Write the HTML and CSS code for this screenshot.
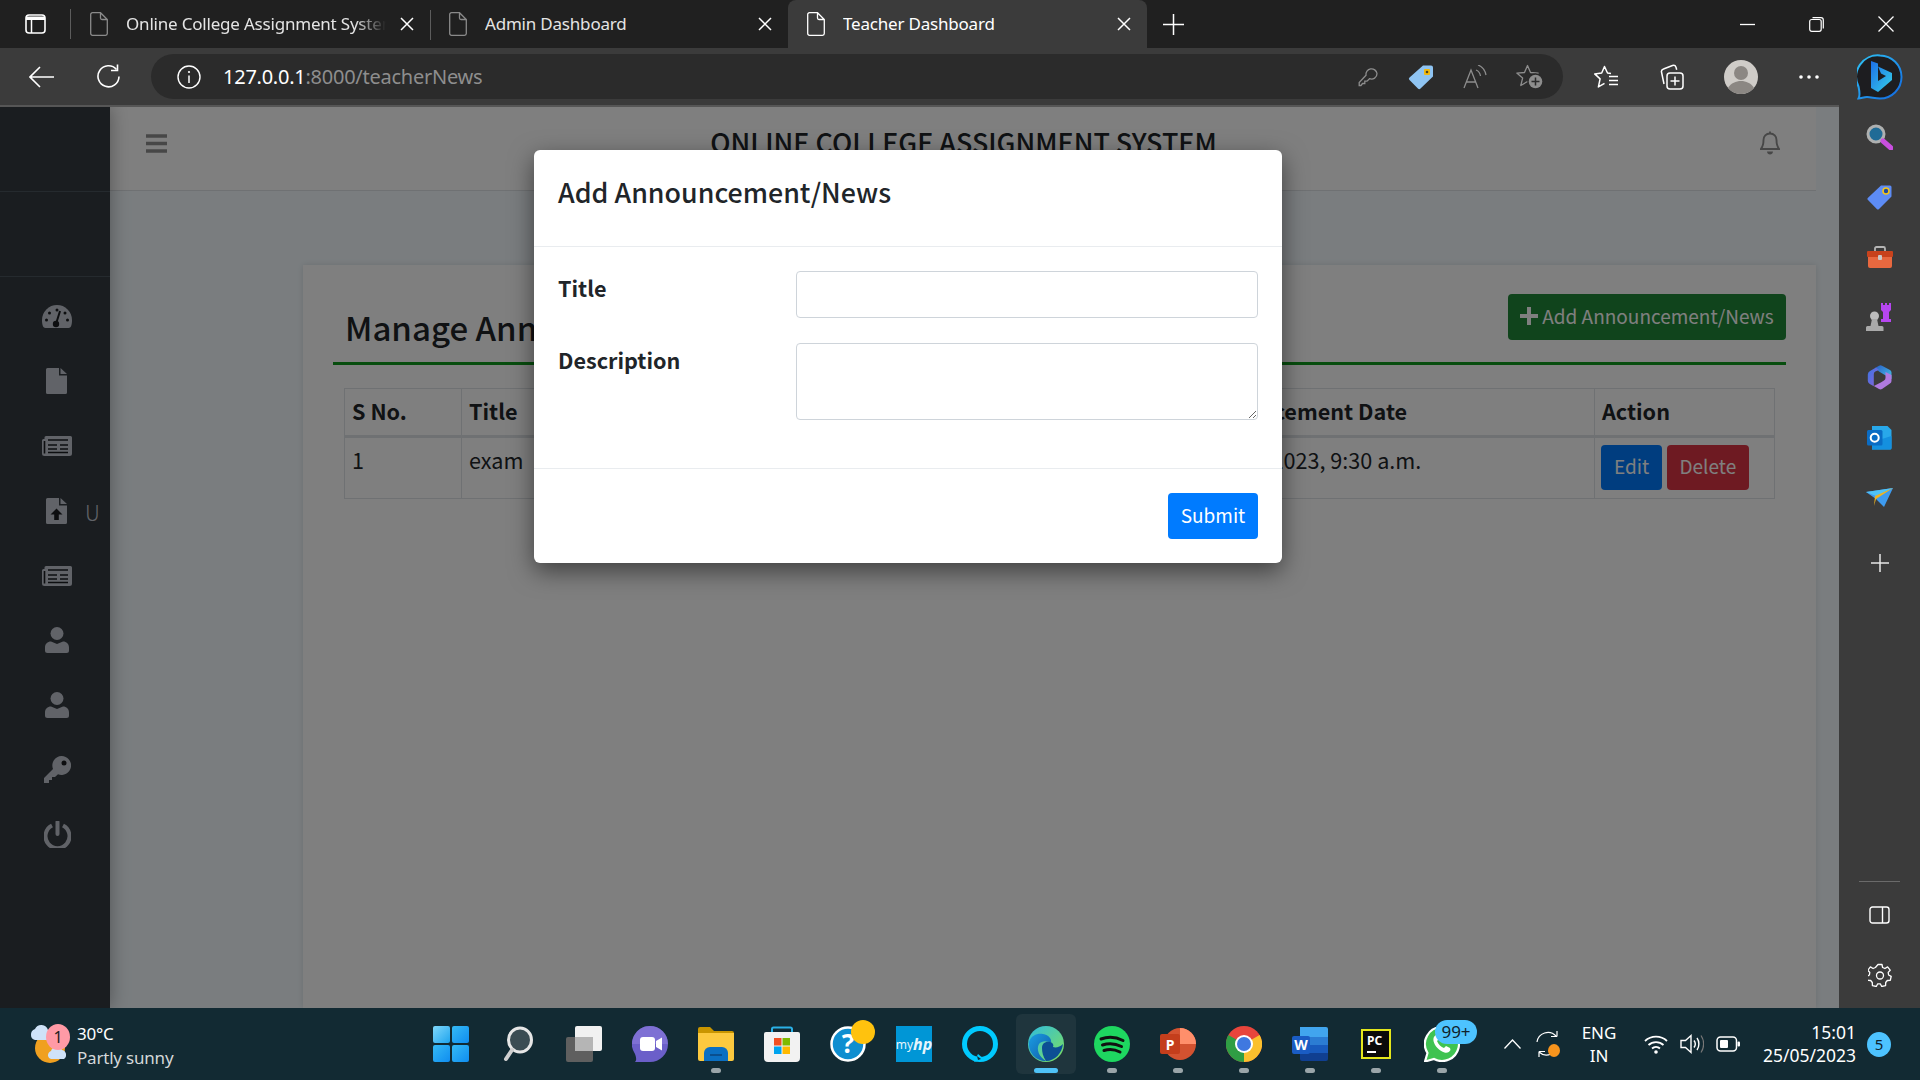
FILE: index.html
```html
<!DOCTYPE html>
<html lang="en">
<head>
    <meta charset="UTF-8">
    <title>Teacher Dashboard</title>
    <link rel="stylesheet" href="styles.css">
</head>
<body>
    <svg class="defs" width="0" height="0">
        <symbol id="doc" viewBox="0 0 18 24"><path d="M2.5 .7h8l6.8 6.8v14a1.8 1.8 0 0 1-1.8 1.8h-13A1.8 1.8 0 0 1 .7 21.500v-19A1.800 1.800 0 0 1 2.500 .7zM10.500 .7v5.300a1.500 1.500 0 0 0 1.500 1.500h5.300" fill="none" stroke="currentColor" stroke-width="1.300"/></symbol>
        <symbol id="close" viewBox="0 0 14 14"><path d="M1 1l12 12M13 1L1 13" stroke="currentColor" stroke-width="1.500"/></symbol>
        <symbol id="news" viewBox="0 0 30 20"><path d="M4 0h24.500A1.500 1.500 0 0 1 30 1.500v16a2.500 2.500 0 0 1-2.500 2.500H2.500A2.500 2.500 0 0 1 0 17.500V4.500a1.500 1.500 0 0 1 1.500-1.500H2.500V1.500A1.500 1.500 0 0 1 4 0z" fill="currentColor"/><path d="M2.500 5v12.500M6 4h20M6 9h9M18 9h8M6 13h9M18 13h8M6 16.500h20" stroke="#1a1d20" stroke-width="1.600" fill="none"/></symbol>
        <symbol id="person" viewBox="0 0 24 26"><circle cx="12" cy="6.500" r="6.500" fill="currentColor"/><path d="M6 14.500l6 2.500 6-2.500c3.500 0 6 2.500 6 6v3a2.500 2.500 0 0 1-2.500 2.500h-19A2.500 2.500 0 0 1 0 23.500v-3c0-3.500 2.500-6 6-6z" fill="currentColor"/></symbol>
    </svg>

    <div class="tabstrip">
        <div class="tab-toggle">
            <svg width="21" height="20" viewBox="0 0 21 20"><rect x="1" y="1" width="19" height="18" rx="3" fill="none" stroke="#fff" stroke-width="1.600"/><path d="M1 2.500h19V6H1z" fill="#fff"/><path d="M6.500 6v13" stroke="#fff" stroke-width="1.500"/></svg>
        </div>
        <div class="tab">
            <svg class="tab-doc" width="18" height="24"><use href="#doc"/></svg>
            <span class="tab-title tab-title-fade">Online College Assignment System</span>
            <svg class="tab-close" width="14" height="14"><use href="#close"/></svg>
        </div>
        <div class="tab tab-second">
            <svg class="tab-doc" width="18" height="24"><use href="#doc"/></svg>
            <span class="tab-title">Admin Dashboard</span>
            <svg class="tab-close" width="14" height="14"><use href="#close"/></svg>
        </div>
        <div class="tab tab-active">
            <svg class="tab-doc" width="18" height="24"><use href="#doc"/></svg>
            <span class="tab-title">Teacher Dashboard</span>
            <svg class="tab-close" width="14" height="14"><use href="#close"/></svg>
        </div>
        <svg class="tab-new" width="21" height="21" viewBox="0 0 21 21"><path d="M10.500 0v21M0 10.500h21" stroke="#fff" stroke-width="1.500"/></svg>
        <div class="window-btns">
            <svg width="15" height="15" viewBox="0 0 15 15"><path d="M0 7.500h15" stroke="#fff" stroke-width="1.300"/></svg>
            <svg width="15" height="15" viewBox="0 0 15 15"><rect x=".7" y="2.500" width="11.500" height="11.800" rx="2" fill="none" stroke="#fff" stroke-width="1.200"/><path d="M3.500 .7h8.500a2.300 2.300 0 0 1 2.300 2.300v8.500" fill="none" stroke="#fff" stroke-width="1.200"/></svg>
            <svg width="16" height="16" viewBox="0 0 16 16"><path d="M.5 .5l15 15M15.500 .5l-15 15" stroke="#fff" stroke-width="1.300"/></svg>
        </div>
    </div>

    <div class="toolbar">
        <svg class="nav-back" width="25" height="22" viewBox="0 0 25 22"><path d="M25 11H1.500M11 1L1 11l10 10" fill="none" stroke="#fff" stroke-width="1.600"/></svg>
        <svg class="nav-reload" width="25" height="25" viewBox="0 0 25 25"><path d="M20.500 5.500A10.500 10.500 0 1 0 23 12.500" fill="none" stroke="#fff" stroke-width="1.600"/><path d="M21.500 .5v6h-6.500" fill="none" stroke="#fff" stroke-width="1.600"/></svg>
        <div class="addressbar">
            <svg class="addr-info" width="24" height="24" viewBox="0 0 24 24"><circle cx="12" cy="12" r="11" fill="none" stroke="#fff" stroke-width="1.400"/><path d="M12 10.500v7.500" stroke="#fff" stroke-width="1.500"/><circle cx="12" cy="7" r="1.100" fill="#fff"/></svg>
            <span class="url"><b>127.0.0.1</b>:8000/teacherNews</span>
            <div class="addr-icons">
                <svg class="addr-key" width="20" height="20" viewBox="0 0 20 20"><path d="M19 6.500a5.500 5.500 0 0 1-7.500 5.200L9 14.200H6.800v2.300H4.500L3 18.500H1.200v-3L8 8.300A5.500 5.500 0 1 1 19 6.500z" fill="none" stroke="#8d8d8d" stroke-width="1.300"/></svg>
                <svg width="26" height="26" viewBox="0 0 26 26"><path d="M15 1.500h8a2 2 0 0 1 2 2v9L12.500 24.500a1.800 1.800 0 0 1-2.600 0L1.500 16a1.800 1.800 0 0 1 0-2.600z" fill="#8fc4f2"/><rect x="16" y="5" width="6" height="6" rx="1" fill="#f2b90f"/><circle cx="19" cy="8" r="1.300" fill="#4b4420"/></svg>
                <svg width="24" height="24" viewBox="0 0 24 24"><path d="M1 23L8 5l7 18M3.500 17h9" fill="none" stroke="#8d8d8d" stroke-width="1.300"/><path d="M13 5c2.500 1 4 3 4.500 6M15 0c4 1.500 7 5 8 10" fill="none" stroke="#8d8d8d" stroke-width="1.300"/></svg>
                <svg width="27" height="25" viewBox="0 0 27 25"><path d="M11.500 1.500l3 7 7.700.6-5.800 5 1.800 7.400-6.700-4-6.700 4 1.800-7.400-5.800-5 7.700-.6z" fill="none" stroke="#8d8d8d" stroke-width="1.300" stroke-linejoin="round"/><circle cx="19.500" cy="17.500" r="8.200" fill="#2b2b2b"/><circle cx="19.500" cy="17.500" r="6.800" fill="#8d8d8d"/><path d="M19.500 13.500v8M15.500 17.500h8" stroke="#2b2b2b" stroke-width="1.500"/></svg>
            </div>
        </div>
        <div class="tool-icons">
            <svg class="tool-fav" width="25" height="24" viewBox="0 0 25 24"><path d="M17 8.400L13.500 8l-3-6.500L7.700 8l-7 .9 5.400 5-1.700 8 6.100-3.600" fill="none" stroke="#fff" stroke-width="1.500" stroke-linejoin="round"/><path d="M15 11.500h9M15 15.500h9M15 19.500h9" stroke="#fff" stroke-width="1.500"/></svg>
            <svg class="tool-coll" width="24" height="26" viewBox="0 0 24 26"><path d="M4 20L1.500 8c-.3-1.500.3-2.500 2-3l9-3.500c1.500-.5 3 .3 3.500 1.700l.7 2.500" fill="none" stroke="#fff" stroke-width="1.500"/><rect x="7" y="9" width="16" height="16" rx="3" fill="none" stroke="#fff" stroke-width="1.500"/><path d="M15 12.500v9M10.500 17h9" stroke="#fff" stroke-width="1.500"/></svg>
            <svg class="tool-avatar" width="34" height="34" viewBox="0 0 34 34"><circle cx="17" cy="17" r="17" fill="#cfccc8"/><circle cx="17" cy="13" r="7" fill="#8b8783"/><path d="M4 28c3-5 8-7 13-7s10 2 13 7a17 17 0 0 1-26 0z" fill="#8b8783"/></svg>
            <svg class="tool-more" width="20" height="4" viewBox="0 0 20 4"><circle cx="2" cy="2" r="1.800" fill="#fff"/><circle cx="10" cy="2" r="1.800" fill="#fff"/><circle cx="18" cy="2" r="1.800" fill="#fff"/></svg>
            <svg class="tool-bing" width="46" height="46" viewBox="0 0 46 46">
                <defs>
                    <linearGradient id="bingRing" x1="0" y1="0" x2="1" y2="1"><stop offset="0" stop-color="#2fc4f5"/><stop offset="1" stop-color="#1268e0"/></linearGradient>
                    <linearGradient id="bingB" x1="0" y1="0" x2="1" y2="1"><stop offset="0" stop-color="#1d6fe8"/><stop offset="1" stop-color="#35d0e8"/></linearGradient>
                </defs>
                <path d="M23 1.500a21.500 21.500 0 0 1 0 43c-5 0-9-1.500-13-1.500-3 0-6 1.500-8.500 1.500 2-3 1-7 0-12A21.500 21.500 0 0 1 23 1.500z" fill="#1d1d20" stroke="url(#bingRing)" stroke-width="2"/>
                <path d="M14 7l7 2.500V27l8-5-5-2.500-3-7L35 19v7L21 38l-7-4z" fill="url(#bingB)"/>
            </svg>
        </div>
    </div>

    <div class="workspace">
        <div class="page">
            <aside class="sidebar">
                <div class="side-head"></div>
                <div class="side-head"></div>
                <nav class="side-nav">
                    <a class="side-link">
                        <svg width="30" height="23" viewBox="0 0 30 23"><path d="M15 0a15 15 0 0 1 15 15c0 3.500-.5 8-3.500 8H3.500C.5 23 0 18.500 0 15A15 15 0 0 1 15 0z" fill="currentColor"/><g fill="#1a1d20"><circle cx="15" cy="5" r="1.500"/><circle cx="7.500" cy="8" r="1.500"/><circle cx="23" cy="8" r="1.500"/><circle cx="4.500" cy="15" r="1.500"/><circle cx="25.500" cy="15" r="1.500"/></g><path d="M14 19l4-13" stroke="#1a1d20" stroke-width="2"/><circle cx="14" cy="19" r="3.200" fill="#1a1d20"/></svg>
                    </a>
                    <a class="side-link">
                        <svg class="icon-file" width="21" height="26" viewBox="0 0 21 26"><path d="M1.500 0H13v7.500h8v17A1.500 1.500 0 0 1 19.500 26h-18A1.500 1.500 0 0 1 0 24.500v-23A1.500 1.500 0 0 1 1.500 0zM14.500 0L21 6h-6.500z" fill="currentColor"/></svg>
                    </a>
                    <a class="side-link"><svg width="30" height="20"><use href="#news"/></svg></a>
                    <a class="side-link">
                        <svg class="icon-file" width="21" height="26" viewBox="0 0 21 26"><path d="M1.500 0H13v7.500h8v17A1.500 1.500 0 0 1 19.500 26h-18A1.500 1.500 0 0 1 0 24.500v-23A1.500 1.500 0 0 1 1.500 0zM14.500 0L21 6h-6.500z" fill="currentColor"/><path d="M10.500 10.500l6 6h-3.700v5.500H8.200v-5.500H4.500z" fill="#1a1d20"/></svg>
                        <span class="side-label">U</span>
                    </a>
                    <a class="side-link"><svg width="30" height="20"><use href="#news"/></svg></a>
                    <a class="side-link"><svg class="icon-user" width="24" height="26"><use href="#person"/></svg></a>
                    <a class="side-link"><svg class="icon-user" width="24" height="26"><use href="#person"/></svg></a>
                    <a class="side-link">
                        <svg class="icon-key" width="27" height="27" viewBox="0 0 27 27"><path d="M17.500 0A9.500 9.500 0 1 1 14 18.300L11 21H8v3H5v3H0v-5l9-9A9.500 9.500 0 0 1 17.500 0z" fill="currentColor"/><circle cx="20" cy="7" r="2.500" fill="#1a1d20"/></svg>
                    </a>
                    <a class="side-link">
                        <svg class="icon-key" width="27" height="27" viewBox="0 0 27 27"><path d="M8 4.500a12 12 0 1 0 11 0" fill="none" stroke="currentColor" stroke-width="4"/><path d="M13.500 1v12" stroke="currentColor" stroke-width="4" stroke-linecap="round"/></svg>
                    </a>
                </nav>
            </aside>

            <div class="wrapper">
                <header class="topbar">
                    <svg width="21" height="19" viewBox="0 0 21 19"><path d="M0 2h21M0 9.500h21M0 17h21" stroke="#8f8f8f" stroke-width="3.600"/></svg>
                    <h1 class="site-title">ONLINE COLLEGE ASSIGNMENT SYSTEM</h1>
                    <svg width="20" height="24" viewBox="0 0 20 24"><path d="M10 2.500c-4 0-6.500 3-6.500 6.500 0 5-1 7-2.700 9h18.400c-1.700-2-2.700-4-2.700-9 0-3.500-2.500-6.500-6.500-6.500zM10 .5v2" fill="none" stroke="#8f8f8f" stroke-width="1.900"/><path d="M7 20.500h6c0 2-1.500 3-3 3s-3-1-3-3z" fill="#8f8f8f"/></svg>
                </header>
                <main class="main">
                    <section class="card">
                        <div class="card-head">
                            <h2>Manage Announcement/News</h2>
                            <a class="btn btn-add">
                                <svg width="18" height="18" viewBox="0 0 18 18"><path d="M9 0v18M0 9h18" stroke="currentColor" stroke-width="4"/></svg>
                                <span>Add Announcement/News</span>
                            </a>
                        </div>
                        <table class="news-table">
                            <colgroup>
                                <col class="col-no">
                                <col class="col-title">
                                <col class="col-desc">
                                <col class="col-date">
                                <col class="col-action">
                            </colgroup>
                            <thead>
                                <tr>
                                    <th>S No.</th>
                                    <th>Title</th>
                                    <th>Description</th>
                                    <th>Announcement Date</th>
                                    <th>Action</th>
                                </tr>
                            </thead>
                            <tbody>
                                <tr>
                                    <td>1</td>
                                    <td>exam</td>
                                    <td>exam</td>
                                    <td>May 25, 2023, 9:30 a.m.</td>
                                    <td>
                                        <a class="btn btn-edit">Edit</a>
                                        <a class="btn btn-delete">Delete</a>
                                    </td>
                                </tr>
                            </tbody>
                        </table>
                    </section>
                </main>
            </div>

            <div class="backdrop"></div>

            <div class="modal">
                <div class="modal-head"><h3>Add Announcement/News</h3></div>
                <form class="modal-body">
                    <label for="title">Title</label>
                    <input type="text" id="title">
                    <label for="description">Description</label>
                    <textarea id="description"></textarea>
                </form>
                <div class="modal-foot"><button class="btn btn-submit">Submit</button></div>
            </div>
        </div>

        <aside class="edge-panel">
            <div class="panel-item">
                <svg width="27" height="26" viewBox="0 0 27 26"><circle cx="10" cy="10" r="8" fill="#1f6b96" stroke="#aeb0b0" stroke-width="3"/><path d="M17 17l8 7" stroke="#c94fe0" stroke-width="5" stroke-linecap="round"/></svg>
            </div>
            <div class="panel-item">
                <svg width="25" height="25" viewBox="0 0 25 25"><path d="M14 .5h9a1.500 1.500 0 0 1 1.500 1.500v9.500L12 24a1.500 1.500 0 0 1-2.200 0L1 15a1.500 1.500 0 0 1 0-2.200z" fill="#5d8cf5"/><circle cx="19" cy="6" r="3" fill="#1f4aa0" stroke="#f5c518" stroke-width="1.600"/></svg>
            </div>
            <div class="panel-item">
                <svg width="28" height="22" viewBox="0 0 28 22"><path d="M9 5V2.500A1.500 1.500 0 0 1 10.500 1h7A1.500 1.500 0 0 1 19 2.500V5" fill="none" stroke="#b5b5b5" stroke-width="1.800"/><rect x="1" y="5" width="26" height="6" rx="1" fill="#c8421c"/><path d="M2 11h24v9a2 2 0 0 1-2 2H4a2 2 0 0 1-2-2z" fill="#e8683f"/><rect x="12" y="9" width="4" height="5" rx="1" fill="#c9c9c9"/></svg>
            </div>
            <div class="panel-item">
                <svg width="28" height="28" viewBox="0 0 28 28"><path d="M15 0h2v2h2V0h2v2h2V0h2v7l-2 2v7h2v3H15v-3h2V9l-2-2z" fill="#b646f0"/><circle cx="8.500" cy="13" r="4.500" fill="#bdbdbd"/><path d="M6 16h5l1.500 7H16a1.500 1.500 0 0 1 1.500 1.500V28H0v-3.500A1.500 1.500 0 0 1 1.500 23h3z" fill="#a9a9a9"/></svg>
            </div>
            <div class="panel-item">
                <svg width="25" height="27" viewBox="0 0 25 27">
                    <defs>
                        <linearGradient id="copA" x1="0" y1="0" x2="1" y2="1"><stop offset="0" stop-color="#3a74e4"/><stop offset="1" stop-color="#8f62d6"/></linearGradient>
                        <linearGradient id="copB" x1="0" y1="0" x2="1" y2="1"><stop offset="0" stop-color="#2a5fc8"/><stop offset="1" stop-color="#45c3e6"/></linearGradient>
                    </defs>
                    <path d="M8.500 3.800L12 1.700a3 3 0 0 1 3 0L23 6a3 3 0 0 1 1.500 2.500V15L17 10.500 12 7.500z" fill="url(#copB)"/>
                    <path d="M9 3.500L3 7A4 4 0 0 0 .8 10.500V17a4 4 0 0 0 2 3l4 2.300V10A3 3 0 0 1 8.300 7.500L12 6z" fill="url(#copA)"/>
                    <path d="M24.500 11v6a3 3 0 0 1-1.500 2.500L15 25a3 3 0 0 1-3 0l-5.200-3 7-3.500 3.200-2a3 3 0 0 0 1.500-2.500V8z" fill="#b07ae0"/>
                </svg>
            </div>
            <div class="panel-item">
                <svg width="25" height="25" viewBox="0 0 25 25"><path d="M5 1h15.500L24.500 5v18a1.500 1.500 0 0 1-1.500 1.500H5z" fill="#28a8ea"/><path d="M5 17l19.500-6v12a1.500 1.500 0 0 1-1.500 1.500H5z" fill="#1490df"/><rect x="0" y="5" width="15.500" height="15.500" rx="1.500" fill="#0a6cc4"/><circle cx="7.700" cy="12.700" r="4" fill="none" stroke="#fff" stroke-width="2"/></svg>
            </div>
            <div class="panel-item">
                <svg width="27" height="19" viewBox="0 0 27 19"><path d="M0 4L27 0 18 19 10 11z" fill="#3e9bef"/><path d="M0 4L27 0 10 8z" fill="#4fc3f7"/><path d="M9 8l18-8-17 11-2 7z" fill="#eeb422"/></svg>
            </div>
            <div class="panel-item panel-add">
                <svg width="18" height="18" viewBox="0 0 18 18"><path d="M9 0v18M0 9h18" stroke="#e8e8e8" stroke-width="1.500"/></svg>
            </div>
            <div class="panel-bottom">
                <div class="panel-rule"></div>
                <svg width="21" height="18" viewBox="0 0 21 18"><rect x="1" y="1" width="19" height="16" rx="2.500" fill="none" stroke="#fff" stroke-width="1.400"/><path d="M13.500 1v16" stroke="#fff" stroke-width="1.400"/></svg>
                <svg width="24" height="24" viewBox="0 0 24 24"><path d="M10 1.500h4l.6 3 2.300 1 2.700-1.600 2.600 3.300-2 2.200.4 2.600 2.600 1.400-.9 4-3 .1-1.600 2-.1 3.100-3.900.9-1.400-2.700h-2.600l-1.400 2.700-3.900-.9-.1-3.100-1.600-2-3-.1-.9-4 2.600-1.400.4-2.600-2-2.200 2.600-3.300 2.700 1.600 2.300-1z" fill="none" stroke="#fff" stroke-width="1.300" stroke-linejoin="round"/><circle cx="12" cy="12.500" r="3.500" fill="none" stroke="#fff" stroke-width="1.300"/></svg>
            </div>
        </aside>
    </div>

    <footer class="taskbar">
        <div class="weather">
            <div class="weather-icon">
                <svg width="36" height="40" viewBox="0 0 36 40"><circle cx="20" cy="24" r="15" fill="#f0a020"/><path d="M2 18a6 6 0 0 1 4-6 7 7 0 0 1 13 1 5 5 0 0 1 0 10H6a5 5 0 0 1-4-5z" fill="#cfe2f8" transform="translate(-1 -7)"/><path d="M18 32a5 5 0 0 1 3-5 6 6 0 0 1 11-1 5 5 0 0 1 2 9H21a4 4 0 0 1-3-3z" fill="#cfe2f8"/></svg>
                <span class="weather-badge">1</span>
            </div>
            <div class="weather-text">
                <div class="weather-temp">30°C</div>
                <div class="weather-desc">Partly sunny</div>
            </div>
        </div>

        <div class="apps">
            <div class="app">
                <svg width="36" height="36" viewBox="0 0 36 36">
                    <defs>
                        <linearGradient id="winA" x1="0" y1="0" x2="1" y2="1"><stop offset="0" stop-color="#7fd8fb"/><stop offset="1" stop-color="#1fa4ee"/></linearGradient>
                        <linearGradient id="winB" x1="0" y1="0" x2="1" y2="1"><stop offset="0" stop-color="#35baf5"/><stop offset="1" stop-color="#0f8df0"/></linearGradient>
                    </defs>
                    <rect x="0" y="0" width="17" height="17" rx="2" fill="url(#winA)"/><rect x="19" y="0" width="17" height="17" rx="2" fill="url(#winB)"/><rect x="0" y="19" width="17" height="17" rx="2" fill="url(#winB)"/><rect x="19" y="19" width="17" height="17" rx="2" fill="url(#winB)"/>
                </svg>
            </div>
            <div class="app">
                <svg width="30" height="36" viewBox="0 0 30 36"><ellipse cx="17" cy="14" rx="11.500" ry="12" fill="#3b4c53" stroke="#e6e6e6" stroke-width="3"/><path d="M9 24l-6 9" stroke="#cfcfcf" stroke-width="4" stroke-linecap="round"/></svg>
            </div>
            <div class="app">
                <svg width="36" height="36" viewBox="0 0 36 36"><rect x="0" y="11" width="27" height="25" rx="2" fill="#5f5f5f"/><rect x="9" y="0" width="27" height="25" rx="2" fill="#f1f1f1"/><rect x="9" y="11" width="18" height="14" fill="#b5b5b5"/></svg>
            </div>
            <div class="app">
                <svg width="36" height="36" viewBox="0 0 36 36"><path d="M18 0a18 18 0 0 1 0 36H3c2-2 1-5 0-8A18 18 0 0 1 18 0z" fill="#6b5fc9"/><path d="M18 0a18 18 0 0 1 18 18H0A18 18 0 0 1 18 0z" fill="#8a7bdc" opacity=".6"/><rect x="8" y="11" width="15" height="14" rx="3" fill="#fff"/><path d="M24 15l6-3.500v13L24 21z" fill="#fff"/></svg>
            </div>
            <div class="app app-open">
                <svg width="36" height="34" viewBox="0 0 36 34"><path d="M0 2a2 2 0 0 1 2-2h10l4 4h18a2 2 0 0 1 2 2v4H0z" fill="#c99500"/><path d="M0 6h36v26a2 2 0 0 1-2 2H2a2 2 0 0 1-2-2z" fill="#fcc93f"/><path d="M6 34v-8a6 6 0 0 1 6-6h12a6 6 0 0 1 6 6v8z" fill="#0b6fc2"/><path d="M12 28h12" stroke="#0a4f8f" stroke-width="2"/></svg>
            </div>
            <div class="app">
                <svg width="36" height="36" viewBox="0 0 36 36"><path d="M8 8V3a1.500 1.500 0 0 1 1.500-1.500h17A1.500 1.500 0 0 1 28 3v5" fill="none" stroke="#2ab0e6" stroke-width="2"/><path d="M2 6h32a2 2 0 0 1 2 2v24a4 4 0 0 1-4 4H4a4 4 0 0 1-4-4V8a2 2 0 0 1 2-2z" fill="#f2f2f2"/><rect x="10" y="12" width="7.500" height="7.500" fill="#f25022"/><rect x="18.500" y="12" width="7.500" height="7.500" fill="#7fba00"/><rect x="10" y="20.500" width="7.500" height="7.500" fill="#00a4ef"/><rect x="18.500" y="20.500" width="7.500" height="7.500" fill="#ffb900"/></svg>
            </div>
            <div class="app">
                <svg width="36" height="36" viewBox="0 0 36 36"><circle cx="18" cy="18" r="16.500" fill="#0f8ed0" stroke="#fff" stroke-width="2.500"/><text x="18" y="27" text-anchor="middle" class="help-mark">?</text></svg>
                <span class="app-dot"></span>
            </div>
            <div class="app">
                <div class="myhp">my<i>hp</i></div>
            </div>
            <div class="app">
                <svg width="36" height="36" viewBox="0 0 36 36"><circle cx="18" cy="18" r="15.500" fill="none" stroke="#00caff" stroke-width="5"/><path d="M12 36l10-3-6-5z" fill="#00caff"/><path d="M15 30l4 3-3 1z" fill="#122a33"/></svg>
            </div>
            <div class="app app-active">
                <svg width="36" height="36" viewBox="0 0 36 36">
                    <defs>
                        <linearGradient id="edgeA" x1="0" y1="0" x2="1" y2="1"><stop offset="0" stop-color="#2ebbe0"/><stop offset="1" stop-color="#7fe05a"/></linearGradient>
                        <linearGradient id="edgeB" x1="0" y1="0" x2="1" y2="1"><stop offset="0" stop-color="#1b9de2"/><stop offset="1" stop-color="#0f5aa8"/></linearGradient>
                    </defs>
                    <circle cx="18" cy="18" r="18" fill="url(#edgeA)"/>
                    <path d="M1 16c2-7 9-9 14-8 6 1 9 5 8 9-3-2-9-3-12 1-3 5 0 13 7 17C8 35 0 27 1 16z" fill="url(#edgeB)"/>
                    <path d="M14 22c0-5 4-7 8-6 3 .8 4 3 3 5 3 1 7 0 10-3-1 9-8 17-17 17-3-4-4-9-4-13z" fill="#0c4f94"/>
                </svg>
            </div>
            <div class="app app-open">
                <svg width="36" height="36" viewBox="0 0 36 36"><circle cx="18" cy="18" r="18" fill="#1ed760"/><path d="M7 13c7-2.500 15-2 22 1.500M8.500 19c6-2 13-1.500 19 1.500M10 24.500c5-1.500 11-1 16 1.500" fill="none" stroke="#111" stroke-width="3" stroke-linecap="round"/></svg>
            </div>
            <div class="app app-open">
                <svg width="36" height="36" viewBox="0 0 36 36"><circle cx="20" cy="18" r="16" fill="#d35230"/><path d="M20 2a16 16 0 0 1 16 16H20z" fill="#ff8f6b"/><rect x="0" y="8" width="20" height="20" rx="2" fill="#c43e1c"/><text x="10" y="24" text-anchor="middle" class="ppt-mark">P</text></svg>
            </div>
            <div class="app app-open">
                <svg width="36" height="36" viewBox="0 0 36 36"><circle cx="18" cy="18" r="18" fill="#e8453c"/><path d="M18 18L2.400 9A18 18 0 0 0 18 36z" fill="#2f9e44"/><path d="M18 18l15.600-9A18 18 0 0 1 18 36z" fill="#fbc02d"/><circle cx="18" cy="18" r="9" fill="#fff"/><circle cx="18" cy="18" r="7" fill="#3f78e0"/></svg>
            </div>
            <div class="app app-open">
                <svg width="36" height="36" viewBox="0 0 36 36"><path d="M8 1h26a2 2 0 0 1 2 2v8H8z" fill="#41a5ee"/><path d="M8 11h28v8H8z" fill="#2b7cd3"/><path d="M8 19h28v8H8z" fill="#185abd"/><path d="M8 27h28v6a2 2 0 0 1-2 2H10a2 2 0 0 1-2-2z" fill="#103f91"/><rect x="0" y="10" width="18" height="18" rx="2" fill="#1a5cc4"/><text x="9" y="24" text-anchor="middle" class="word-mark">W</text></svg>
            </div>
            <div class="app app-open">
                <div class="pycharm"><span>PC</span><i></i></div>
            </div>
            <div class="app app-open">
                <svg width="36" height="36" viewBox="0 0 36 36"><path d="M18 1a17 17 0 1 1-8 32L1 35.500l2.500-8.500A17 17 0 0 1 18 1z" fill="#3fc351" stroke="#fff" stroke-width="2.200"/><path d="M12 9c-2 1-3 3-2.500 6 1 5 6 10 11 11.500 3 .7 5-.5 6-2.500l-.5-2-4-2-2 2c-3-1-5.500-3.500-7-7l2-2-2-4z" fill="#fff"/></svg>
                <span class="app-count">99+</span>
            </div>
        </div>

        <div class="tray">
            <svg class="tray-chevron" width="17" height="10" viewBox="0 0 17 10"><path d="M.5 9.500l8-8.500 8 8.500" fill="none" stroke="#fff" stroke-width="1.300"/></svg>
            <div class="tray-sync">
                <svg width="24" height="28" viewBox="0 0 24 28"><path d="M20 6A11 11 0 0 0 1 12M21 6.500V1M21 6.500h-6M3 22a11 11 0 0 0 12 2M3 21.500V27M3 21.500h6" fill="none" stroke="#fff" stroke-width="1.200"/></svg>
                <span class="sync-dot"></span>
            </div>
            <div class="tray-lang">ENG<br>IN</div>
            <svg class="tray-wifi" width="24" height="20" viewBox="0 0 24 20"><path d="M1 7a16 16 0 0 1 22 0M4.500 11a11 11 0 0 1 15 0M8 14.500a6 6 0 0 1 8 0" fill="none" stroke="#fff" stroke-width="1.800"/><circle cx="12" cy="18" r="1.800" fill="#fff"/></svg>
            <svg class="tray-vol" width="24" height="22" viewBox="0 0 24 22"><path d="M1 7.500h4.500L11 2.500v17l-5.500-5H1z" fill="none" stroke="#fff" stroke-width="1.400"/><path d="M14 7.500c1.500 2 1.500 5 0 7M17 5c2.500 3.500 2.500 8.500 0 12" fill="none" stroke="#fff" stroke-width="1.400"/><path d="M21 2.500c3.500 5 3.500 12 0 17" fill="none" stroke="#777" stroke-width="1.200"/></svg>
            <svg class="tray-batt" width="24" height="16" viewBox="0 0 24 16"><rect x="1" y="1" width="19.500" height="14" rx="3.500" fill="none" stroke="#fff" stroke-width="1.500"/><rect x="4" y="4" width="8" height="8" rx="1" fill="#fff"/><rect x="21.500" y="5.500" width="2.500" height="5" rx="1" fill="#fff"/></svg>
            <div class="tray-clock">15:01<br>25/05/2023</div>
            <span class="tray-notif">5</span>
        </div>
    </footer>
</body>
</html>
```

FILE: styles.css
```css
* {
    box-sizing: border-box;
}

html, body {
    margin: 0;
    padding: 0;
    height: 1080px;
    overflow: hidden;
}

body {
    display: flex;
    flex-direction: column;
    width: 1920px;
    background-color: #202020;
    font-family: "Noto Sans CJK SC", "Noto Sans", sans-serif;
    color: #212529;
}

.defs {
    position: absolute;
}

h1, h2, h3 {
    margin: 0;
}

/* browser tabs */
.tabstrip {
    display: flex;
    align-items: center;
    flex: 0 0 48px;
    height: 48px;
    background-color: #202020;
    color: #fff;
    font-family: "Noto Sans", sans-serif;
}

.tab-toggle {
    display: flex;
    align-items: center;
    width: 71px;
    height: 30px;
    padding-left: 25px;
    border-right: 1px solid #5c5c5c;
}

.tab {
    display: flex;
    align-items: center;
    width: 359px;
    height: 48px;
    padding: 0 16px 0 19px;
    position: relative;
}

.tab + .tab::before {
    content: "";
    position: absolute;
    left: 0;
    top: 10px;
    height: 30px;
    border-left: 1px solid #5c5c5c;
}

.tab-second {
    width: 358px;
}

.tab-doc {
    flex: none;
    color: #8a8a8a;
    margin-right: 18px;
}

.tab-title {
    flex: 1;
    margin-bottom: 2px;
    font-size: 17px;
    letter-spacing: -0.2px;
    white-space: nowrap;
    overflow: hidden;
    color: #e4e4e4;
}

.tab-title-fade {
    -webkit-mask-image: linear-gradient(to right, #000 88%, transparent 100%);
    mask-image: linear-gradient(to right, #000 88%, transparent 100%);
}

.tab-close {
    flex: none;
    margin-left: 14px;
    color: #fff;
}

.tab-active {
    width: 359px;
    border-radius: 8px 8px 0 0;
    background-color: #3b3b3b;
}

.tab-active::before {
    display: none;
}

.tab-active .tab-doc {
    color: #fff;
}

.tab-active .tab-title {
    color: #fff;
}

.tab-new {
    margin-left: 16px;
}

.window-btns {
    display: flex;
    align-items: center;
    gap: 54px;
    margin-left: auto;
    padding-right: 26px;
}

/* browser toolbar */
.toolbar {
    display: flex;
    align-items: center;
    flex: 0 0 57px;
    height: 57px;
    background-color: #3b3b3b;
    font-family: "Noto Sans", sans-serif;
    padding-left: 29px;
}

.nav-reload {
    margin-left: 42px;
}

.addressbar {
    display: flex;
    align-items: center;
    width: 1412px;
    height: 45px;
    margin-left: 30px;
    padding-left: 26px;
    border-radius: 23px;
    background-color: #2b2b2b;
}

.url {
    margin-left: 22px;
    font-size: 20px;
    letter-spacing: -0.25px;
    color: #8e8e8e;
}

.url b {
    font-weight: 400;
    color: #fff;
}

.addr-icons {
    display: flex;
    align-items: center;
    gap: 29px;
    margin-left: auto;
    padding-right: 20px;
}

.addr-key {
    margin-right: 1px;
}

.tool-icons {
    display: flex;
    align-items: center;
}

.tool-fav {
    margin-left: 31px;
}

.tool-coll {
    margin-left: 41px;
}

.tool-avatar {
    margin-left: 40px;
}

.tool-more {
    margin-left: 41px;
}

.tool-bing {
    margin-left: 38px;
}

/* page area */
.workspace {
    display: flex;
    flex: 1;
    min-height: 0;
}

.page {
    display: flex;
    flex: 1;
    position: relative;
    overflow: hidden;
    border-top: 2px solid #565656;
}

.sidebar {
    flex: 0 0 110px;
    background-color: #343a40;
    color: #c2c7d0;
    position: relative;
    box-shadow: 0 0 18px rgba(0, 0, 0, 0.35);
}

.side-head {
    height: 85px;
    border-bottom: 1px solid #4b545c;
}

.side-nav {
    padding-top: 7px;
}

.side-link {
    display: flex;
    align-items: center;
    height: 64.800px;
    padding-left: 42px;
}

.icon-file {
    margin-left: 4px;
    margin-right: 5px;
}

.icon-user {
    margin-left: 3px;
}

.icon-key {
    margin-left: 2px;
}

.side-label {
    margin-left: 13px;
    padding-top: 2px;
    font-size: 21px;
    font-weight: 300;
}

.wrapper {
    display: flex;
    flex-direction: column;
    flex: 1;
    min-width: 0;
    background-color: #f4fbff;
}

.topbar {
    display: flex;
    align-items: center;
    justify-content: space-between;
    flex: 0 0 84px;
    margin-right: 23px;
    padding: 0 36px 11px;
    background-color: #fff;
    border-bottom: 1px solid #dee2e6;
}

.site-title {
    margin-bottom: 3px;
    font-size: 26.900px;
    font-weight: 500;
    line-height: 32px;
    color: #212529;
}

.main {
    flex: 1;
    min-height: 0;
    padding: 74px 23px 0 193px;
}

.card {
    height: 100%;
    padding: 0 30px;
    background-color: #fff;
    box-shadow: 0 0 6px rgba(0, 0, 0, 0.12);
}

.card-head {
    display: flex;
    align-items: flex-start;
    justify-content: space-between;
    height: 100px;
    padding: 29px 0 0 12px;
    border-bottom: 3px solid #0e9a1c;
}

.card-head h2 {
    font-size: 33px;
    font-weight: 500;
    line-height: 66px;
}

.btn {
    display: inline-flex;
    align-items: center;
    justify-content: center;
    padding: 0 0 3px;
    border: none;
    border-radius: 4px;
    font-family: inherit;
    font-size: 19px;
    color: #fff;
}

.btn-add {
    gap: 4px;
    width: 278px;
    height: 46px;
    background-color: #218838;
}

.news-table {
    width: 1430px;
    margin: 23px 0 0 11px;
    table-layout: fixed;
    border-collapse: collapse;
    font-size: 21.600px;
    line-height: 32px;
}

.col-no {
    width: 117px;
}

.col-title {
    width: 240px;
}

.col-desc {
    width: 482px;
}

.col-date {
    width: 411px;
}

.col-action {
    width: 180px;
}

.news-table th, .news-table td {
    padding: 6px 6px 8px 7px;
    text-align: left;
    vertical-align: top;
    border: 1px solid #dee2e6;
    white-space: nowrap;
}

.news-table th {
    font-weight: 700;
    border-bottom-width: 3px;
}

.news-table td {
    height: 60px;
}

.news-table td .btn {
    height: 45px;
    vertical-align: top;
}

.btn-edit {
    width: 61px;
    margin: 1px 0 0 -1px;
    background-color: #007bff;
}

.btn-delete {
    width: 82px;
    margin-top: 1px;
    background-color: #dc3545;
}

.backdrop {
    position: absolute;
    inset: 0;
    background-color: rgba(0, 0, 0, 0.5);
}

/* modal */
.modal {
    position: absolute;
    left: 534px;
    top: 43px;
    width: 748px;
    height: 413px;
    background-color: #fff;
    border-radius: 6px;
    box-shadow: 0 8px 24px rgba(0, 0, 0, 0.5);
}

.modal-head {
    height: 97px;
    padding: 22px 24px 0;
    border-bottom: 1px solid #e9ecef;
}

.modal-head h3 {
    font-size: 26.800px;
    font-weight: 500;
    line-height: 40px;
}

.modal-body {
    display: grid;
    grid-template-columns: 238px 462px;
    grid-template-rows: 47px 77px;
    row-gap: 25px;
    height: 222px;
    margin: 0;
    padding: 24px 24px 0;
    border-bottom: 1px solid #e9ecef;
}

.modal-body label {
    padding-top: 1px;
    font-size: 21.600px;
    font-weight: 700;
    line-height: 32px;
}

.modal-body input, .modal-body textarea {
    display: block;
    width: 462px;
    border: 1px solid #ced4da;
    border-radius: 4px;
    outline: none;
    background-color: #fff;
}

.modal-foot {
    display: flex;
    justify-content: flex-end;
    padding: 24px 24px 0;
}

.btn-submit {
    width: 90px;
    height: 46px;
    background-color: #007bff;
}

/* edge side panel */
.edge-panel {
    display: flex;
    flex-direction: column;
    align-items: center;
    flex: 0 0 81px;
    padding-top: 2px;
    background-color: #3b3b3b;
}

.panel-item {
    display: flex;
    align-items: center;
    justify-content: center;
    flex: 0 0 60px;
}

.panel-add {
    margin-top: 6px;
}

.panel-bottom {
    display: flex;
    flex-direction: column;
    align-items: center;
    gap: 39px;
    margin-top: auto;
    padding-bottom: 21px;
}

.panel-rule {
    width: 41px;
    margin-bottom: -15px;
    border-top: 1px solid #6a6a6a;
}

/* windows taskbar */
.taskbar {
    display: flex;
    align-items: center;
    flex: 0 0 72px;
    height: 72px;
    padding-left: 30px;
    background-color: #122a33;
    color: #fff;
    font-family: "Noto Sans", sans-serif;
}

.weather {
    display: flex;
    align-items: center;
    width: 386px;
}

.weather-icon {
    position: relative;
    width: 36px;
    height: 40px;
}

.weather-badge {
    position: absolute;
    left: 16px;
    top: 0;
    width: 24px;
    height: 26px;
    border-radius: 50%;
    background-color: #ff9aa6;
    color: #222;
    font-size: 16px;
    line-height: 26px;
    text-align: center;
}

.weather-text {
    margin-left: 11px;
    padding-top: 3px;
    font-size: 17px;
    line-height: 24px;
    letter-spacing: -0.2px;
}

.weather-desc {
    color: #d4d8da;
}

.apps {
    display: flex;
    align-items: center;
}

.app {
    display: flex;
    align-items: center;
    justify-content: center;
    position: relative;
    width: 66px;
    height: 60px;
    border-radius: 6px;
}

.app:first-child {
    width: 69px;
}

.app-open::after, .app-active::after {
    content: "";
    position: absolute;
    left: 28px;
    top: 54px;
    width: 10px;
    height: 5px;
    border-radius: 3px;
    background-color: #9aa5a9;
}

.app-active {
    background-color: #1f353d;
    width: 60px;
    margin: 0 3px;
}

.app-active::after {
    left: 18px;
    width: 24px;
    background-color: #4fc3f7;
}

.app-dot {
    position: absolute;
    left: 36px;
    top: 6px;
    width: 24px;
    height: 24px;
    border-radius: 50%;
    background-color: #ffc20e;
}

.app-count {
    position: absolute;
    left: 26px;
    top: 6px;
    width: 42px;
    height: 24px;
    border-radius: 12px;
    background-color: #4dc3ff;
    color: #10222b;
    font-size: 17px;
    line-height: 24px;
    text-align: center;
}

.help-mark {
    font-size: 26px;
    font-weight: 700;
    fill: #fff;
}

.ppt-mark, .word-mark {
    font-size: 14px;
    font-weight: 700;
    fill: #fff;
}

.myhp {
    display: flex;
    align-items: center;
    justify-content: center;
    width: 36px;
    height: 36px;
    background-color: #0096d6;
    font-size: 12px;
    color: #e6f5fc;
}

.myhp i {
    font-size: 16px;
    font-weight: 700;
}

.pycharm {
    display: flex;
    flex-direction: column;
    width: 30px;
    height: 30px;
    padding: 3px 4px;
    border: 2px solid #e4e61c;
    background-color: #0a0a0a;
    font-size: 12px;
    font-weight: 700;
    line-height: 14px;
}

.pycharm i {
    display: block;
    width: 9px;
    margin-top: 3px;
    border-top: 2px solid #fff;
}

.tray {
    display: flex;
    align-items: center;
    position: relative;
    height: 100%;
    margin-left: 29px;
    font-size: 17px;
}

.tray-chevron {
    flex: none;
}

.tray-sync {
    position: relative;
    width: 24px;
    height: 28px;
    margin-left: 15px;
}

.sync-dot {
    position: absolute;
    left: 12px;
    top: 14px;
    width: 12px;
    height: 13px;
    border-radius: 50%;
    background-color: #f7941d;
}

.tray-lang {
    width: 52px;
    margin-left: 13px;
    line-height: 23px;
    text-align: center;
}

.tray-wifi {
    margin-left: 19px;
}

.tray-vol {
    margin-left: 12px;
}

.tray-batt {
    margin-left: 12px;
}

.tray-clock {
    width: 116px;
    font-size: 17.500px;
    line-height: 23px;
    text-align: right;
}

.tray-notif {
    flex: none;
    width: 24px;
    height: 25px;
    margin-left: 11px;
    border-radius: 50%;
    background-color: #4dc3ff;
    color: #10222b;
    font-size: 15px;
    line-height: 25px;
    text-align: center;
}
```
